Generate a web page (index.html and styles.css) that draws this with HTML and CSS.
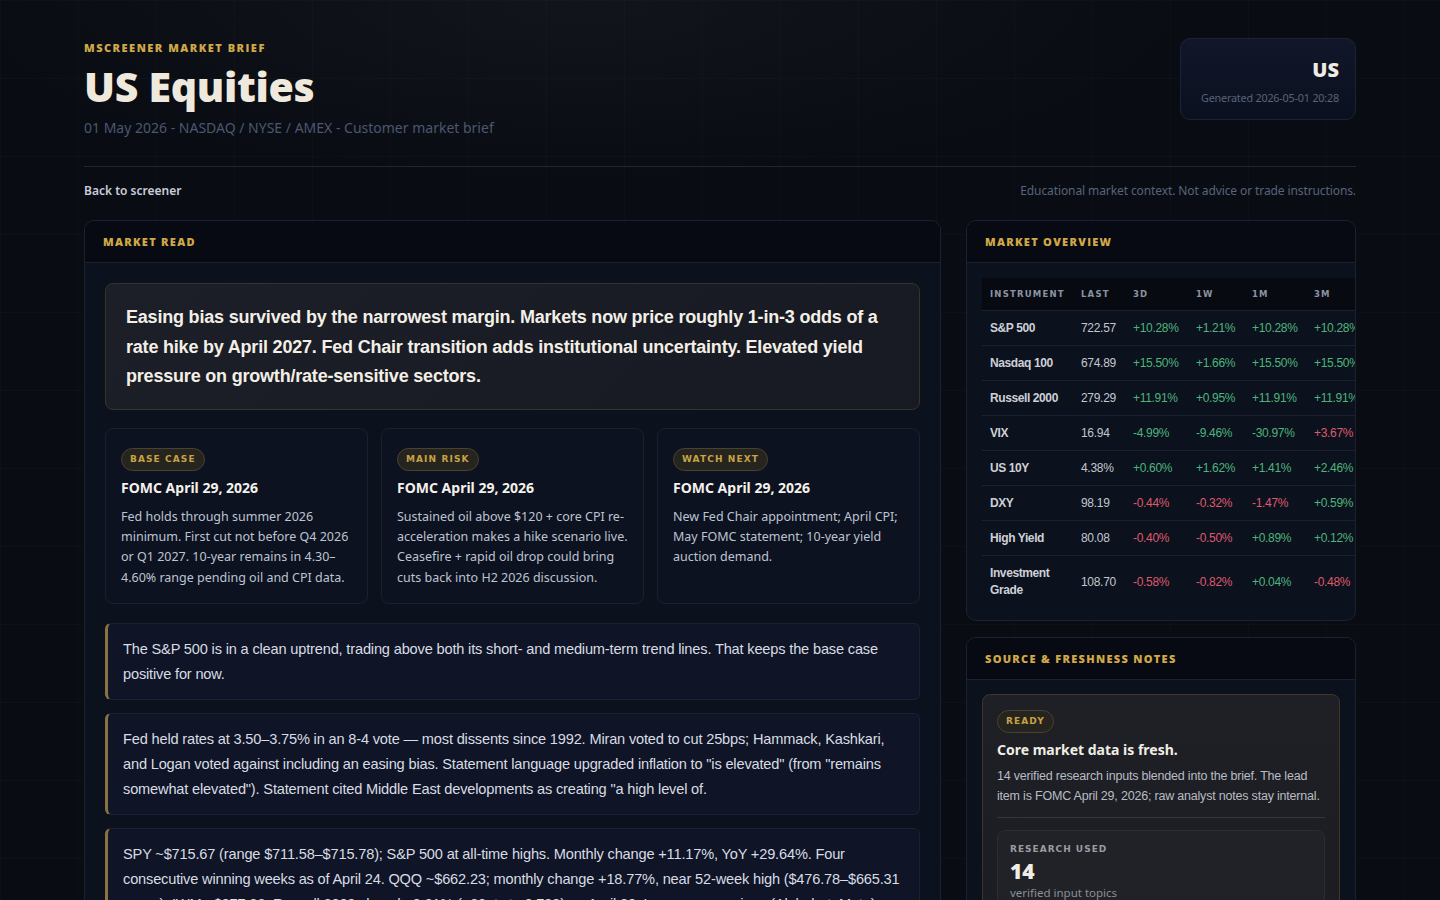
FILE: index.html
```html
<!DOCTYPE html>
<html lang="en">
<head>
  <meta charset="UTF-8">
  <meta name="viewport" content="width=device-width, initial-scale=1.0">
  <title>US Equities - mScreener Market Brief</title>
  <link rel="stylesheet" href="styles.css">
</head>
<body>
  <div class="page">
    <header class="hero">
      <div class="hero-text">
        <div class="eyebrow">mScreener Market Brief</div>
        <h1>US Equities</h1>
        <p class="subtitle">01 May 2026 - NASDAQ / NYSE / AMEX - Customer market brief</p>
      </div>
      <div class="stamp">
        <div class="stamp-market">US</div>
        <div class="stamp-time">Generated 2026-05-01 20:28</div>
      </div>
    </header>

    <nav class="toolbar">
      <a href="#" class="back-link">Back to screener</a>
      <span class="disclaimer">Educational market context. Not advice or trade instructions.</span>
    </nav>

    <main class="layout">
      <section class="panel">
        <div class="panel-head">Market Read</div>
        <div class="panel-body">
          <div class="lead">
            Easing bias survived by the narrowest margin. Markets now price roughly 1-in-3 odds of a rate hike by April 2027. Fed Chair transition adds institutional uncertainty. Elevated yield pressure on growth/rate-sensitive sectors.
          </div>

          <div class="scenarios">
            <div class="scenario">
              <span class="pill">Base Case</span>
              <h3>FOMC April 29, 2026</h3>
              <p>Fed holds through summer 2026 minimum. First cut not before Q4 2026 or Q1 2027. 10-year remains in 4.30–4.60% range pending oil and CPI data.</p>
            </div>
            <div class="scenario">
              <span class="pill">Main Risk</span>
              <h3>FOMC April 29, 2026</h3>
              <p>Sustained oil above $120 + core CPI re-acceleration makes a hike scenario live. Ceasefire + rapid oil drop could bring cuts back into H2 2026 discussion.</p>
            </div>
            <div class="scenario">
              <span class="pill">Watch Next</span>
              <h3>FOMC April 29, 2026</h3>
              <p>New Fed Chair appointment; April CPI; May FOMC statement; 10-year yield auction demand.</p>
            </div>
          </div>

          <p class="note">The S&amp;P 500 is in a clean uptrend, trading above both its short- and medium-term trend lines. That keeps the base case positive for now.</p>
          <p class="note">Fed held rates at 3.50–3.75% in an 8-4 vote — most dissents since 1992. Miran voted to cut 25bps; Hammack, Kashkari, and Logan voted against including an easing bias. Statement language upgraded inflation to "is elevated" (from "remains somewhat elevated"). Statement cited Middle East developments as creating "a high level of.</p>
          <p class="note">SPY ~$715.67 (range $711.58–$715.78); S&amp;P 500 at all-time highs. Monthly change +11.17%, YoY +29.64%. Four consecutive winning weeks as of April 24. QQQ ~$662.23; monthly change +18.77%, near 52-week high ($476.78–$665.31 range). IWM ~$277.26; Russell 2000 closed +2.21% (+60pts to 2,799) on April 20. Large-cap earnings (Alphabet, Meta) remain the next test for leadership.</p>
        </div>
      </section>

      <aside class="side">
        <section class="panel">
          <div class="panel-head">Market Overview</div>
          <div class="table-wrap">
            <table class="quotes">
              <colgroup>
                <col class="c-name"><col class="c-last"><col class="c-3d"><col class="c-1w"><col class="c-1m"><col class="c-3m">
              </colgroup>
              <thead>
                <tr><th>Instrument</th><th>Last</th><th>3D</th><th>1W</th><th>1M</th><th>3M</th></tr>
              </thead>
              <tbody>
                <tr><td class="name">S&amp;P 500</td><td>722.57</td><td class="up">+10.28%</td><td class="up">+1.21%</td><td class="up">+10.28%</td><td class="up">+10.28%</td></tr>
                <tr><td class="name">Nasdaq 100</td><td>674.89</td><td class="up">+15.50%</td><td class="up">+1.66%</td><td class="up">+15.50%</td><td class="up">+15.50%</td></tr>
                <tr><td class="name">Russell 2000</td><td>279.29</td><td class="up">+11.91%</td><td class="up">+0.95%</td><td class="up">+11.91%</td><td class="up">+11.91%</td></tr>
                <tr><td class="name">VIX</td><td>16.94</td><td class="up">-4.99%</td><td class="up">-9.46%</td><td class="up">-30.97%</td><td class="down">+3.67%</td></tr>
                <tr><td class="name">US 10Y</td><td>4.38%</td><td class="up">+0.60%</td><td class="up">+1.62%</td><td class="up">+1.41%</td><td class="up">+2.46%</td></tr>
                <tr><td class="name">DXY</td><td>98.19</td><td class="down">-0.44%</td><td class="down">-0.32%</td><td class="down">-1.47%</td><td class="up">+0.59%</td></tr>
                <tr><td class="name">High Yield</td><td>80.08</td><td class="down">-0.40%</td><td class="down">-0.50%</td><td class="up">+0.89%</td><td class="up">+0.12%</td></tr>
                <tr><td class="name">Investment Grade</td><td>108.70</td><td class="down">-0.58%</td><td class="down">-0.82%</td><td class="up">+0.04%</td><td class="down">-0.48%</td></tr>
              </tbody>
            </table>
          </div>
        </section>

        <section class="panel">
          <div class="panel-head">Source &amp; Freshness Notes</div>
          <div class="panel-body side-body">
            <div class="fresh">
              <span class="pill">Ready</span>
              <h3>Core market data is fresh.</h3>
              <p>14 verified research inputs blended into the brief. The lead item is FOMC April 29, 2026; raw analyst notes stay internal.</p>
              <div class="stat">
                <div class="stat-label">Research used</div>
                <div class="stat-value">14</div>
                <div class="stat-note">verified input topics</div>
              </div>
            </div>
          </div>
        </section>
      </aside>
    </main>
  </div>
</body>
</html>
```

FILE: styles.css
```css
html, body {
  margin: 0;
  padding: 0;
}
body {
  font-family: 'Noto Sans', 'Open Sans', sans-serif;
  color: #e6e2d8;
  background-color: #090c13;
  background-image:
    radial-gradient(ellipse 900px 260px at 40% 0%, rgba(255, 255, 255, 0.035), transparent 70%),
    linear-gradient(rgba(255, 255, 255, 0.016) 1px, transparent 1px),
    linear-gradient(90deg, rgba(255, 255, 255, 0.016) 1px, transparent 1px);
  background-size: 100% 100%, 78px 78px, 78px 78px;
  min-height: 100vh;
}
.page {
  max-width: 1272px;
  margin: 0 auto;
  padding-bottom: 40px;
}

/* header */
.hero {
  display: flex;
  justify-content: space-between;
  align-items: flex-start;
  padding-top: 38px;
  padding-bottom: 29px;
  border-bottom: 1px solid #22262f;
}
.eyebrow {
  margin-top: 2px;
  font-family: 'Open Sans', sans-serif;
  font-size: 11px;
  font-weight: 800;
  letter-spacing: 1.5px;
  text-transform: uppercase;
  color: #d1a848;
}
h1 {
  margin: 6px 0 0;
  font-family: 'Open Sans', sans-serif;
  font-size: 41px;
  font-weight: 800;
  line-height: 50px;
  letter-spacing: -0.3px;
  color: #efe9dd;
}
.subtitle {
  margin: 7px 0 0;
  font-size: 14px;
  color: #4b5870;
}
.stamp {
  width: 176px;
  height: 82px;
  box-sizing: border-box;
  padding: 18px 16px 0;
  text-align: right;
  border: 1px solid #1d2334;
  border-radius: 10px;
  background: linear-gradient(180deg, #111729, #0b1020);
}
.stamp-market {
  font-family: 'Open Sans', sans-serif;
  font-size: 20px;
  font-weight: 800;
  line-height: 26px;
  color: #f1ece2;
}
.stamp-time {
  margin-top: 7px;
  font-size: 10.8px;
  white-space: nowrap;
  letter-spacing: -0.2px;
  color: #586378;
}

/* toolbar */
.toolbar {
  display: flex;
  justify-content: space-between;
  align-items: center;
  padding: 15px 0 21px;
  font-size: 12px;
}
.back-link {
  color: #c9ced9;
  font-weight: 600;
  text-decoration: none;
}
.disclaimer {
  color: #58647a;
  letter-spacing: -0.1px;
}

/* layout */
.layout {
  display: grid;
  grid-template-columns: 1fr 390px;
  gap: 25px;
  align-items: start;
}
.side {
  display: flex;
  flex-direction: column;
  gap: 16px;
}
.panel {
  background: #0c111e;
  border: 1px solid #1b2130;
  border-radius: 10px;
  overflow: hidden;
}
.panel-head {
  height: 41px;
  line-height: 42px;
  padding: 0 18px;
  background: #070a12;
  border-bottom: 1px solid #1b2130;
  font-family: 'Open Sans', sans-serif;
  font-size: 11px;
  font-weight: 800;
  letter-spacing: 1.3px;
  text-transform: uppercase;
  color: #d1a848;
}
.panel-body {
  padding: 20px;
}

/* market read */
.lead {
  padding: 19px 20px 17px;
  border: 1px solid #363428;
  border-radius: 8px;
  background: linear-gradient(135deg, #1c1f28, #171a22);
  font-family: 'Liberation Sans', Arial, sans-serif;
  font-size: 18px;
  font-weight: 700;
  line-height: 29.5px;
  letter-spacing: -0.2px;
  color: #f3efe6;
}
.scenarios {
  display: grid;
  grid-template-columns: repeat(3, 1fr);
  gap: 13px;
  margin-top: 18px;
}
.scenario {
  padding: 16px 15px 15px;
  border: 1px solid #1a2031;
  border-radius: 8px;
  background: #0d1221;
}
.pill {
  display: inline-block;
  height: 21px;
  line-height: 21px;
  padding: 0 8px;
  border: 1px solid #4a4230;
  border-radius: 12px;
  background: #25241f;
  font-family: 'DejaVu Sans', sans-serif;
  font-size: 9px;
  font-weight: 700;
  letter-spacing: 1.1px;
  text-transform: uppercase;
  color: #c8a243;
}
.scenario h3 {
  margin: 7px 0 9px;
  font-size: 14px;
  font-weight: 700;
  line-height: 20px;
  color: #f4f1ea;
}
.scenario p {
  margin: 0;
  font-size: 12.5px;
  line-height: 20.4px;
  color: #bdc4d0;
}
.note {
  margin: 13px 0 0;
  padding: 13px 14px 12px 15px;
  border: 1px solid #1a2132;
  border-left: 3px solid #8a7341;
  border-radius: 6px;
  background: #0f1526;
  font-family: 'Liberation Sans', Arial, sans-serif;
  font-size: 14.6px;
  line-height: 25px;
  letter-spacing: -0.17px;
  color: #d8dce4;
}
.scenarios + .note {
  margin-top: 19px;
}

/* quotes table */
.table-wrap {
  padding: 15px 0 13px 15px;
}
.quotes {
  width: 400px;
  table-layout: fixed;
  border-collapse: collapse;
  font-family: 'Liberation Sans', Arial, sans-serif;
  font-size: 12px;
}
.c-name { width: 91px; }
.c-last { width: 52px; }
.c-3d { width: 63px; }
.c-1w { width: 56px; }
.c-1m { width: 62px; }
.c-3m { width: 76px; }
.quotes th {
  height: 32px;
  padding: 0 0 0 8px;
  text-align: left;
  background: #070a11;
  font-family: 'DejaVu Sans', sans-serif;
  font-size: 8.5px;
  font-weight: 700;
  letter-spacing: 1.2px;
  text-transform: uppercase;
  color: #8b93a3;
}
.quotes td {
  height: 34px;
  padding: 0 0 0 8px;
  border-top: 1px solid #1b2130;
  color: #c3c7ce;
  white-space: nowrap;
  letter-spacing: -0.3px;
}
.quotes td.name {
  font-weight: 700;
  color: #cdd0d6;
  white-space: normal;
  line-height: 17px;
  letter-spacing: -0.4px;
}
.quotes tbody tr:last-child td {
  height: 51px;
}
.quotes .up {
  color: #4cb57a;
}
.quotes .down {
  color: #df5a6b;
}

/* freshness */
.side-body {
  padding: 14px 15px 15px;
}
.fresh {
  padding: 12px 14px 0;
  border: 1px solid #3d3728;
  border-radius: 8px;
  background: linear-gradient(180deg, #1e2026, #1b1d22);
}
.fresh h3 {
  margin: 7px 0 6px;
  font-size: 14px;
  font-weight: 700;
  line-height: 20px;
  color: #f1ede4;
}
.fresh p {
  margin: 0;
  padding-bottom: 11px;
  border-bottom: 1px solid #33353b;
  font-family: 'Liberation Sans', Arial, sans-serif;
  font-size: 12.5px;
  line-height: 20px;
  letter-spacing: -0.2px;
  color: #b9bcc3;
}
.stat {
  margin-top: 12px;
  margin-bottom: 14px;
  padding: 13px 12px 10px;
  border: 1px solid #2b2d33;
  border-radius: 8px;
  background: #202227;
}
.stat-label {
  font-family: 'DejaVu Sans', sans-serif;
  font-size: 9px;
  font-weight: 700;
  letter-spacing: 1px;
  text-transform: uppercase;
  color: #9a9ca3;
}
.stat-value {
  margin-top: 3px;
  font-family: 'Open Sans', sans-serif;
  font-size: 21px;
  font-weight: 800;
  color: #f1ede4;
}
.stat-note {
  margin-top: 0;
  font-size: 11.5px;
  color: #8c8f96;
}
```
